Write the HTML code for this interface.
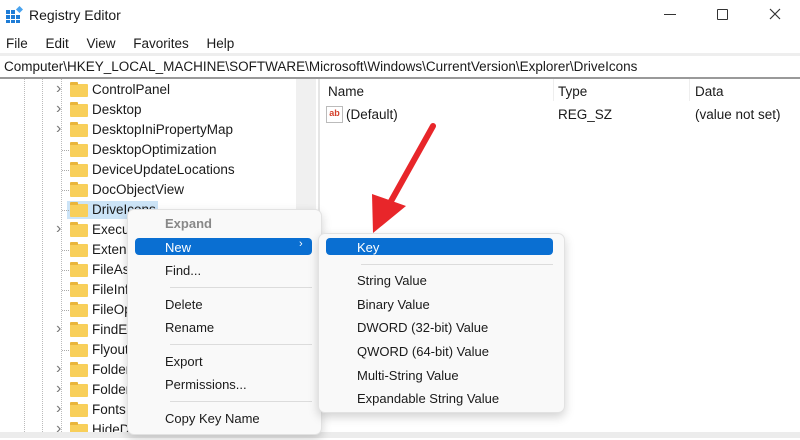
<!DOCTYPE html>
<html><head><meta charset="utf-8"><style>
body{margin:0;width:800px;height:438px;overflow:hidden;background:#fff;font-family:"Liberation Sans",sans-serif;font-size:13px;color:#1a1a1a;position:relative}
.a{position:absolute;white-space:nowrap}
.row{position:absolute;height:20px;line-height:20px;font-size:13.5px}
.fold{position:absolute;width:18px;height:13px;background:#f8cf5a;border-radius:1px}
.fold:before{content:"";position:absolute;left:0;top:-2px;width:8px;height:3px;background:#e9b53b;border-radius:1px 1px 0 0}
.chev{position:absolute;color:#777;font-size:16px}
.menu{position:absolute;background:#f9f9f9;border:1px solid #e2e2e2;border-radius:7px;box-shadow:0 4px 10px rgba(0,0,0,.18)}
.hl{position:absolute;background:#0a6fd2;border-radius:4px}
.sep{position:absolute;height:1px;background:#dcdcdc}
</style></head><body>
<svg class="a" style="left:6px;top:6px" width="17" height="17" viewBox="0 0 17 17"><g fill="#1e7cd6"><rect x="0" y="4" width="4" height="4"/><rect x="5" y="4" width="4" height="4"/><rect x="0" y="9" width="4" height="4"/><rect x="5" y="9" width="4" height="4"/><rect x="10" y="9" width="4" height="4"/><rect x="0" y="14" width="4" height="3"/><rect x="5" y="14" width="4" height="3"/><rect x="10" y="14" width="4" height="3"/></g><rect x="11" y="1" width="5" height="5" fill="#4aa3ee" transform="rotate(45 13.5 3.5)"/></svg>
<div class="a" style="left:29px;top:7px;font-size:14px">Registry Editor</div>
<div class="a" style="left:664px;top:14px;width:12px;height:1px;background:#333"></div>
<div class="a" style="left:717px;top:9px;width:9px;height:9px;border:1.3px solid #333;border-radius:1px"></div>
<svg class="a" style="left:769px;top:8px" width="12" height="12"><path d="M1 1L11 11M11 1L1 11" stroke="#333" stroke-width="1.2"/></svg>
<div class="a" style="left:6px;top:36px;font-size:13.5px;word-spacing:14px">File Edit View Favorites Help</div>
<div class="a" style="left:0;top:53px;width:800px;height:3px;background:#eee"></div>
<div class="a" style="left:4px;top:59px;font-size:13.5px">Computer\HKEY_LOCAL_MACHINE\SOFTWARE\Microsoft\Windows\CurrentVersion\Explorer\DriveIcons</div>
<div class="a" style="left:0;top:77px;width:800px;height:2px;background:#999"></div>
<div class="a" style="left:24px;top:79px;height:353px;border-left:1px dotted #bbb"></div>
<div class="a" style="left:42px;top:79px;height:353px;border-left:1px dotted #bbb"></div>
<div class="a" style="left:61px;top:79px;height:353px;border-left:1px dotted #bbb"></div>
<div class="a" style="left:296px;top:79px;width:20px;height:353px;background:#f0f0f0"></div>
<div class="a" style="left:318px;top:79px;width:2px;height:359px;background:#e5e5e5"></div>
<div id="tree"></div>
<div class="a" style="left:328px;top:84px;font-size:13.5px">Name</div>
<div class="a" style="left:553px;top:79px;height:22px;border-left:1px solid #eee"></div>
<div class="a" style="left:558px;top:84px;font-size:13.5px">Type</div>
<div class="a" style="left:689px;top:79px;height:22px;border-left:1px solid #eee"></div>
<div class="a" style="left:695px;top:84px;font-size:13.5px">Data</div>
<div class="a" style="left:326px;top:106px;width:15px;height:15px;border:1px solid #bbb;font-size:9px;color:#d4402b;font-weight:bold;line-height:12px;text-align:center;background:#fff">ab</div>
<div class="a" style="left:346px;top:107px;font-size:13.5px">(Default)</div>
<div class="a" style="left:558px;top:107px;font-size:13.5px">REG_SZ</div>
<div class="a" style="left:695px;top:107px;font-size:13.5px">(value not set)</div>
<div class="a" style="left:0;top:432px;width:800px;height:6px;background:#ececec"></div>
<div class="menu" style="left:127px;top:209px;width:193px;height:224px"></div>
<div class="hl" style="left:135px;top:238px;width:177px;height:17px"></div>
<div class="a" style="left:165px;top:216px;color:#888;font-weight:bold">Expand</div>
<div class="a" style="left:165px;top:240px;color:#fff">New</div>
<div class="a" style="left:299px;top:238px;color:#fff;font-size:11px">›</div>
<div class="a" style="left:165px;top:263px">Find...</div>
<div class="sep" style="left:170px;top:287px;width:142px"></div>
<div class="a" style="left:165px;top:297px">Delete</div>
<div class="a" style="left:165px;top:320px">Rename</div>
<div class="sep" style="left:170px;top:344px;width:142px"></div>
<div class="a" style="left:165px;top:354px">Export</div>
<div class="a" style="left:165px;top:377px">Permissions...</div>
<div class="sep" style="left:170px;top:401px;width:142px"></div>
<div class="a" style="left:165px;top:411px">Copy Key Name</div>
<div class="menu" style="left:318px;top:233px;width:245px;height:178px"></div>
<div class="hl" style="left:326px;top:238px;width:227px;height:17px"></div>
<div class="a" style="left:357px;top:240px;color:#fff">Key</div>
<div class="sep" style="left:361px;top:264px;width:192px"></div>
<div class="a" style="left:357px;top:273px">String Value</div>
<div class="a" style="left:357px;top:297px">Binary Value</div>
<div class="a" style="left:357px;top:320px">DWORD (32-bit) Value</div>
<div class="a" style="left:357px;top:344px">QWORD (64-bit) Value</div>
<div class="a" style="left:357px;top:368px">Multi-String Value</div>
<div class="a" style="left:357px;top:391px">Expandable String Value</div>
<svg class="a" style="left:0;top:0" width="800" height="438"><line x1="433" y1="126" x2="390" y2="203" stroke="#e8262a" stroke-width="6" stroke-linecap="round"/><polygon points="373,233 372,194 406,206" fill="#e8262a"/></svg>
<script>
var t=[["ControlPanel",1],["Desktop",1],["DesktopIniPropertyMap",1],["DesktopOptimization",0],["DeviceUpdateLocations",0],["DocObjectView",0],["DriveIcons",0],["Executa",1],["Extensi",0],["FileAss",0],["FileInf",0],["FileOpe",0],["FindExt",1],["FlyoutM",0],["Folder",1],["Folder",1],["Fonts",1],["HideDe",1]];
var h="";t.forEach(function(r,i){var y=80+i*20;
if(i==6)h+='<div class="a" style="left:67px;top:'+(y+1)+'px;width:91px;height:18px;background:#cce4f7"></div>';
if(r[1])h+='<div class="chev" style="left:56px;top:'+(y)+'px">&#x203A;</div>';else h+='<div class="a" style="left:62px;top:'+(y+10)+'px;width:7px;border-top:1px dotted #aaa"></div>';
h+='<div class="fold" style="left:70px;top:'+(y+4)+'px"></div><div class="row" style="left:92px;top:'+y+'px">'+r[0]+'</div>';});
document.getElementById("tree").innerHTML=h;
</script>
</body></html>
